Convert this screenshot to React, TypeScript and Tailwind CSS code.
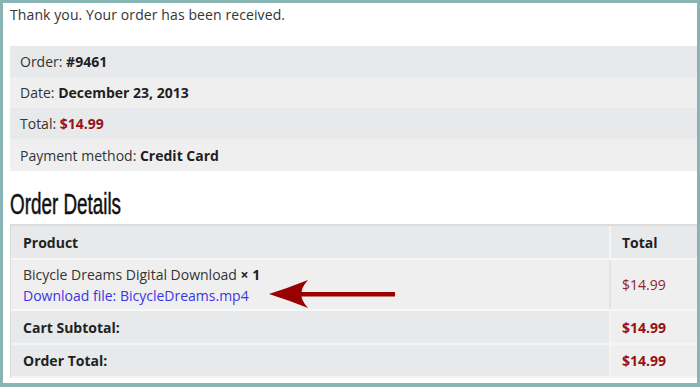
const body = { fontFamily: '"Open Sans", "Noto Sans", sans-serif' };

function InfoRow({ label, value, shade, red }: any) {
  return (
    <li
      className={`h-[31px] flex items-center pl-[10px] ${shade ? "bg-[#e8e9ea]" : "bg-[#efefef]"}`}
    >
      {label}:&nbsp;
      <strong className={red ? "text-[#9b1111]" : "text-[#1f1f1f]"}>{value}</strong>
    </li>
  );
}

function Arrow() {
  return (
    <svg width="140" height="34" viewBox="0 0 140 34" className="absolute left-[253px] top-[17px]">
      <path d="M5 17 Q24 11 44 3 Q36 12 38 17 Q36 22 44 31 Q24 23 5 17 Z" fill="#990000" />
      <rect x="37" y="15" width="94" height="4.5" fill="#990000" />
    </svg>
  );
}

export default function App() {
  return (
    <div
      className="w-[700px] h-[387px] overflow-hidden bg-white border-[#88b5b4] border-t-[3px] border-l-[3px] border-r-[3px] border-b-[4px] text-[14px] text-[#333]"
      style={body}
    >
      <div className="pl-[7px]">
        <p className="h-[43px] pt-[1px] leading-[22px] tracking-[0.1px]">Thank you. Your order has been received.</p>

        {/* order meta */}
        <ul>
          <InfoRow label="Order" value="#9461" shade />
          <InfoRow label="Date" value="December 23, 2013" />
          <InfoRow label="Total" value="$14.99" shade red />
          <li className="h-[32px] flex items-center pl-[10px] bg-[#efefef]">
            Payment method:&nbsp;<strong className="text-[#1f1f1f]">Credit Card</strong>
          </li>
        </ul>

        <h2
          className="h-[53px] flex items-center pt-[14px] text-[29px] text-[#111] origin-left scale-x-[0.65] whitespace-nowrap [-webkit-text-stroke:0.5px_#111]"
          style={{ fontFamily: '"Liberation Sans", sans-serif' }}
        >
          Order Details
        </h2>

        {/* order table */}
        <div className="border-t-2 border-l border-[#dcdcdc] w-[700px]">
          <div className="grid grid-cols-[600px_1fr] h-[32px] bg-[#e8e9ea] font-bold text-[#222]">
            <div className="flex items-center pl-[12px] border-r-2 border-[#f4f4f4]">Product</div>
            <div className="flex items-center pl-[11px]">Total</div>
          </div>
          <div className="grid grid-cols-[600px_1fr] h-[51px] bg-[#efefef] border-t-2 border-[#f7f7f7]">
            <div className="relative flex flex-col justify-center pl-[12px] border-r-2 border-[#e4e4e4] leading-[21px]">
              <span>
                Bicycle Dreams Digital Download <strong className="text-[#222]">× 1</strong>
              </span>
              <a className="text-[#3b35e3]">Download file: BicycleDreams.mp4</a>
              <Arrow />
            </div>
            <div className="flex items-center pl-[11px] text-[#8e2424]">$14.99</div>
          </div>
          <div className="grid grid-cols-[600px_1fr] h-[34px] bg-[#e8e9ea] border-t-2 border-[#f7f7f7] font-bold">
            <div className="flex items-center pl-[12px] border-r-2 border-[#f4f4f4] text-[#222]">Cart Subtotal:</div>
            <div className="flex items-center pl-[11px] text-[#9b1111] bg-[#efefef]">$14.99</div>
          </div>
          <div className="grid grid-cols-[600px_1fr] h-[35px] bg-[#e8e9ea] border-t-2 border-b-2 border-[#f4f4f4] font-bold">
            <div className="flex items-center pl-[12px] border-r-2 border-[#f4f4f4] text-[#222]">Order Total:</div>
            <div className="flex items-center pl-[11px] text-[#9b1111] bg-[#efefef]">$14.99</div>
          </div>
        </div>
      </div>
    </div>
  );
}
